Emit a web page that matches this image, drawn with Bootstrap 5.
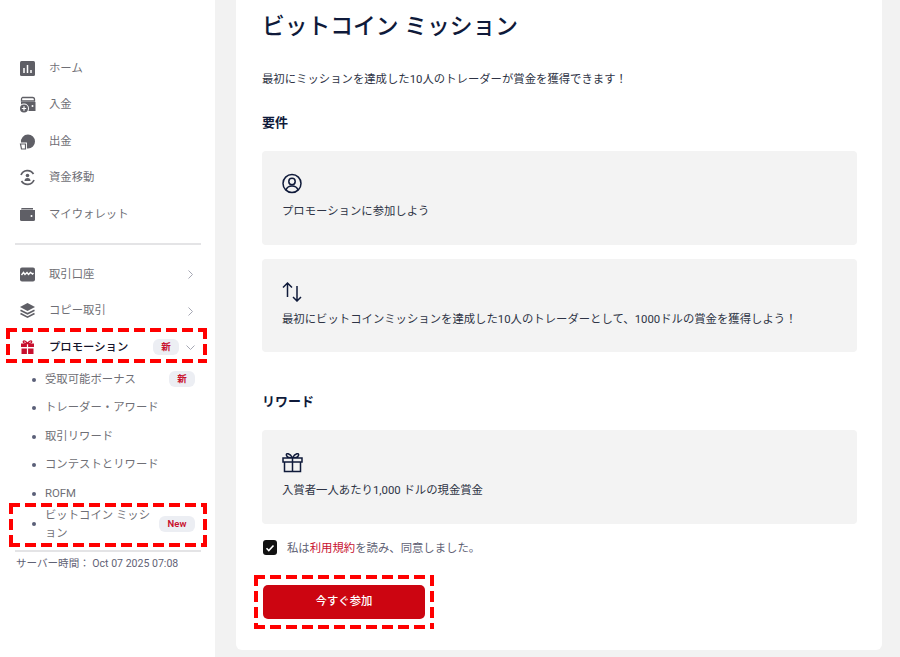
<!DOCTYPE html>
<html lang="ja">
<head>
<meta charset="utf-8">
<title>ビットコイン ミッション</title>
<link href="https://cdn.jsdelivr.net/npm/bootstrap@5.3.0/dist/css/bootstrap.min.css" rel="stylesheet">
<style>
html,body{height:657px;overflow:hidden}
body{font-family:Roboto,"Noto Sans CJK JP",sans-serif;background:#f2f2f2;color:#0f1a3a}
.shell{height:657px}
.side{width:215px;flex:none;background:#fff;padding-top:50px}
.mitem{height:36.5px;padding-left:19px;font-size:11.375px;color:#6f6f76;position:relative}
.mitem svg{width:17px;height:17px;flex:none;margin-right:13px}
.mitem .chev{width:9px;height:9px;margin:0;position:absolute;left:186px;top:14px}
.sep{height:2px;background:#e4e4e6;margin:0 14px 0 15px}
.sep1{margin-top:10.5px;margin-bottom:11px}
.mitem.on{color:#14142a;font-weight:500;height:35.5px;padding-top:1px}
.tagx{background:#eceef3;color:#c8102e;font-size:9.5px;font-weight:600;border-radius:6px;height:16px;line-height:16px;text-align:center;position:absolute}
.tag1{left:153px;width:26px;top:10px}
.subs{list-style:none;margin:0;padding:0}
.subs li{height:28.5px;font-size:11.375px;color:#6f6f76;padding-left:45px;position:relative;line-height:28.5px}
.subs li::before{content:"";position:absolute;left:32px;top:13px;width:4px;height:4px;border-radius:50%;background:#5a5f78}
.subs li.two{height:44px;line-height:18px;margin-top:-1px;padding-right:62px}
.subs li.two::before{top:16px}
.tag2{left:169px;width:26px;top:6px}
.tag3{left:159px;width:36px;top:10px}
.dash{position:absolute;pointer-events:none;
  background:
    linear-gradient(90deg,#f00 11px,transparent 11px) top left/16px 4px repeat-x,
    linear-gradient(90deg,#f00 11px,transparent 11px) bottom left/16px 4px repeat-x,
    linear-gradient(180deg,#f00 11px,transparent 11px) top left/4px 16px repeat-y,
    linear-gradient(180deg,#f00 11px,transparent 11px) top right/4px 16px repeat-y}
.d1{left:6px;top:-1px;width:201px;height:35px}
.d2{left:9px;top:-3px;width:198px;height:44px}
.d3{left:-8px;top:-10px;width:180px;height:54px}
.stime{font-size:10.56px;color:#5f6275;padding:4px 0 0 16px}
.wrap{flex:1;padding:0 18px 7px 21px;min-width:0}
.sheet{background:#fff;border-radius:0 0 6px 6px;height:650px;padding:13px 25px 0 26px}
.ttl{font-size:22.75px;font-weight:500;line-height:28px;margin:0 0 29px}
.lede{font-size:11.375px;line-height:18px;margin:0 0 25px;color:#2e3345}
.hd{font-size:13px;font-weight:700;line-height:20px;margin:0 0 18px}
.tile{background:#f3f3f3;border-radius:4px;height:93.5px;padding:22px 20px;font-size:11.375px;color:#2e3345;margin-bottom:14px}
.tile svg{display:block;width:21px;height:21px;margin-bottom:8px}
.tile p{margin:0;line-height:18px}
.gap1{height:26px}
.agree{font-size:11.375px;color:#5f6275;line-height:16px;margin:16px 0 29px 1px}
.box{width:14px;height:15px;background:#111;border-radius:3px;margin-right:10px;display:flex;align-items:center;justify-content:center}
.box svg{width:10px;height:10px}
.agree a{color:#c8102e;text-decoration:none}
.go{width:162px;height:34px;background:#cc0511;color:#fff;border-radius:5px;font-size:11.375px;font-weight:500;border:0;padding:0;margin-left:1px}
.anchor{position:relative;width:162px}
</style>
</head>
<body>
<div class="d-flex shell">
<aside class="side">
  <div class="mitem d-flex align-items-center"><svg viewBox="0 0 17 17"><rect x="1" y="1" width="15" height="15" rx="1.5" fill="#5f5f66"/><path d="M5 8v5M8.500 5v8M12 10v3" stroke="#fff" stroke-width="1.500"/></svg>ホーム</div>
  <div class="mitem d-flex align-items-center"><svg viewBox="0 0 17 17"><path d="M3.500 1.500h10a2 2 0 0 1 2 2v1.500h-13V3.500a2 2 0 0 1 1-2z" fill="none" stroke="#5f5f66" stroke-width="1.300"/><path d="M2 6h14.500v9H2z" fill="#5f5f66"/><circle cx="13.500" cy="10" r="1" fill="#fff"/><circle cx="5" cy="12.500" r="5" fill="#fff"/><circle cx="5" cy="12.500" r="4" fill="#5f5f66"/><path d="M2.800 12.500h4.400M5 10.300v4.400" stroke="#fff" stroke-width="1.200"/></svg>入金</div>
  <div class="mitem d-flex align-items-center"><svg viewBox="0 0 17 17"><path d="M9 1.500a7 7 0 1 1 0 14H8v-6H2a7 7 0 0 1 7-8z" fill="#5f5f66"/><path d="M1.500 11h5v5h-4z" fill="none" stroke="#5f5f66" stroke-width="1.200"/></svg>出金</div>
  <div class="mitem d-flex align-items-center"><svg viewBox="0 0 17 17"><path d="M14.500 5A7 7 0 0 0 2 6M2.500 12A7 7 0 0 0 15 11" fill="none" stroke="#5f5f66" stroke-width="1.700"/><circle cx="8.500" cy="6.500" r="1.800" fill="#5f5f66"/><path d="M5.500 12a3 3 0 0 1 6 0z" fill="#5f5f66"/></svg>資金移動</div>
  <div class="mitem d-flex align-items-center"><svg viewBox="0 0 17 17"><path d="M3 2h11v1.500H2A1.500 1.500 0 0 1 3 2z" fill="#5f5f66"/><path d="M1 4h15v9.500a1.500 1.500 0 0 1-1.500 1.500h-12A1.500 1.500 0 0 1 1 13.500z" fill="#5f5f66"/><circle cx="12.500" cy="10" r="1" fill="#fff"/></svg>マイウォレット</div>
  <div class="sep sep1"></div>
  <div class="mitem d-flex align-items-center"><svg viewBox="0 0 17 17"><rect x="1" y="1.500" width="15" height="14" rx="2" fill="#5f5f66"/><path d="M2.500 9l2-2.500L6 8.500l2-2 1.500 2 2-2 2 1.500 1-1" fill="none" stroke="#fff" stroke-width="1.400"/></svg>取引口座<svg class="chev" viewBox="0 0 9 9"><path d="M2.500 .5l4 4-4 4" fill="none" stroke="#a6a8b4"/></svg></div>
  <div class="mitem d-flex align-items-center"><svg viewBox="0 0 17 17"><path d="M8.500 1l7.500 4-7.500 4L1 5z" fill="#5f5f66"/><path d="M1.500 8.200l7 3.600 7-3.600M1.500 11.500l7 3.700 7-3.700" fill="none" stroke="#5f5f66" stroke-width="1.600"/></svg>コピー取引<svg class="chev" viewBox="0 0 9 9"><path d="M2.500 .5l4 4-4 4" fill="none" stroke="#a6a8b4"/></svg></div>
  <div class="mitem on d-flex align-items-center"><svg viewBox="0 0 17 17"><path d="M2 4.500h13v3.500H2zM2.500 9.500h12V15h-12z" fill="#c8102e"/><path d="M8.500 4v11" stroke="#fff" stroke-width="1.200"/><path d="M8.500 4.500C6 1 3.500 1.500 4.500 3.500 5 4.500 7 4.500 8.500 4.500 10 4.500 12 4.500 12.500 3.500 13.500 1.500 11 1 8.500 4.500z" fill="none" stroke="#c8102e" stroke-width="1.300"/></svg>プロモーション<span class="tagx tag1">新</span><svg class="chev" viewBox="0 0 9 9"><path d="M.5 2.500l4 4 4-4" fill="none" stroke="#a6a8b4"/></svg><span class="dash d1"></span></div>
  <ul class="subs">
    <li>受取可能ボーナス<span class="tagx tag2">新</span></li>
    <li>トレーダー・アワード</li>
    <li>取引リワード</li>
    <li>コンテストとリワード</li>
    <li>ROFM</li>
    <li class="two">ビットコイン ミッション<span class="tagx tag3">New</span><span class="dash d2"></span></li>
  </ul>
  <div class="sep"></div>
  <div class="stime">サーバー時間： Oct 07 2025 07:08</div>
</aside>
<main class="wrap">
  <div class="sheet">
    <h1 class="ttl">ビットコイン ミッション</h1>
    <p class="lede">最初にミッションを達成した10人のトレーダーが賞金を獲得できます！</p>
    <h2 class="hd">要件</h2>
    <div class="tile"><svg viewBox="0 0 21 21" fill="none" stroke="#0f1a3a" stroke-width="1.500"><circle cx="10" cy="10.500" r="9"/><circle cx="10" cy="8.500" r="3.200"/><path d="M4 17c1-3 3.500-4 6-4s5 1 6 4"/></svg><p>プロモーションに参加しよう</p></div>
    <div class="tile"><svg viewBox="0 0 21 21" fill="none" stroke="#0f1a3a" stroke-width="1.500"><path d="M5.500 16V2M1 6.500L5.500 2 10 6.500M15 5v15M11 16l4 4 4-4"/></svg><p>最初にビットコインミッションを達成した10人のトレーダーとして、1000ドルの賞金を獲得しよう！</p></div>
    <div class="gap1"></div>
    <h2 class="hd">リワード</h2>
    <div class="tile"><svg viewBox="0 0 21 21" fill="none" stroke="#0f1a3a" stroke-width="1.500"><path d="M1 6h19v4H1zM2.500 10v9.500h16V10M10.500 6v13.500M10.500 6C8 1 3.500 .5 4.500 3.500 5 5 7 6 10.500 6 14 6 16 5 16.500 3.500 17.500 .5 13 1 10.500 6z"/></svg><p>入賞者一人あたり1,000 ドルの現金賞金</p></div>
    <div class="agree d-flex align-items-center"><span class="box"><svg viewBox="0 0 10 10"><path d="M1.500 5.200l2.300 2.300 4.700-5" fill="none" stroke="#fff" stroke-width="1.600"/></svg></span><span>私は<a href="#">利用規約</a>を読み、同意しました。</span></div>
    <div class="anchor"><button class="btn go" type="button">今すぐ参加</button><span class="dash d3"></span></div>
  </div>
</main>
</div>
<script src="https://cdn.jsdelivr.net/npm/bootstrap@5.3.0/dist/js/bootstrap.bundle.min.js"></script>
</body>
</html>
